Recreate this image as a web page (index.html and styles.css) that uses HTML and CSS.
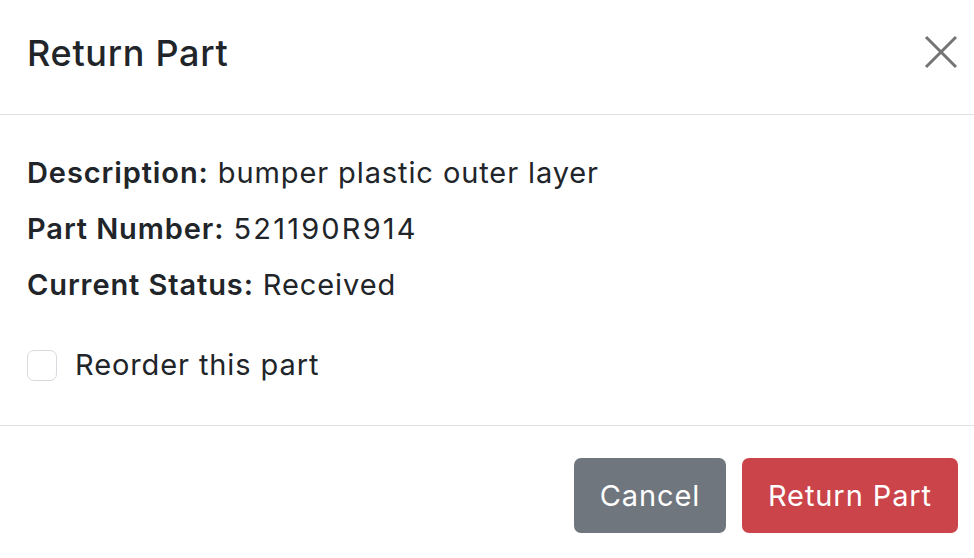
FILE: index.html
```html
<!DOCTYPE html>
<html lang="en">
<head>
  <meta charset="UTF-8" />
  <meta name="viewport" content="width=device-width, initial-scale=1" />
  <title>Return Part</title>
  <link rel="stylesheet" href="styles.css">
</head>
<body>

  <div class="modal">
    <!-- Header -->
    <div class="modal-header">
      <h5 class="modal-title">Return Part</h5>
      <button class="close" aria-label="Close">
        <svg width="34" height="34" viewBox="0 0 34 34">
          <path d="M2 2 L32 32 M32 2 L2 32" stroke="currentColor" stroke-width="3" stroke-linecap="butt" fill="none" />
        </svg>
      </button>
    </div>

    <!-- Body -->
    <div class="modal-body">
      <div class="details">
        <p><strong>Description:</strong> bumper plastic outer layer</p>
        <p><strong>Part Number:</strong> <span class="part-no">521190R914</span></p>
        <p><strong>Current Status:</strong> Received</p>
      </div>
      <label class="form-check">
        <input type="checkbox" class="check-input" />
        <span>Reorder this part</span>
      </label>
    </div>

    <!-- Footer -->
    <div class="modal-footer">
      <button class="btn btn-secondary">Cancel</button>
      <button class="btn btn-danger">Return Part</button>
    </div>
  </div>

</body>
</html>
```

FILE: styles.css
```css
* {
  margin: 0;
  padding: 0;
  box-sizing: border-box;
}

body {
  font-family: Inter, 'Noto Sans', sans-serif;
  background: #fff;
  color: #212529;
  width: 974px;
}

.modal {
  background: #fff;
}

.modal-header {
  height: 115px;
  display: flex;
  justify-content: space-between;
  align-items: flex-start;
  padding: 30px 16px 0 27px;
  border-bottom: 1px solid #dee2e6;
}

.modal-title {
  font-size: 36px;
  font-weight: 500;
  line-height: 46px;
  letter-spacing: 0.7px;
}

.close {
  background: none;
  border: none;
  color: #747474;
  width: 34px;
  height: 34px;
  margin-top: 5px;
  cursor: pointer;
}

.close svg {
  display: block;
}

.modal-body {
  display: flex;
  flex-direction: column;
  padding: 34px 27px 36px;
  font-size: 29px;
  letter-spacing: 0.9px;
}

.details {
  display: flex;
  flex-direction: column;
  gap: 8px;
}

.details p {
  line-height: 48px;
}

.details strong {
  font-weight: 600;
}

.part-no {
  letter-spacing: 2.2px;
}

.form-check {
  display: flex;
  align-items: center;
  gap: 18px;
  margin-top: 32px;
  line-height: 48px;
}

.check-input {
  appearance: none;
  width: 30px;
  height: 31px;
  border: 1.5px solid #d6dadf;
  border-radius: 7px;
  background: #fff;
}

.modal-footer {
  display: flex;
  justify-content: flex-end;
  gap: 16px;
  padding: 32px 16px 25px;
  border-top: 1px solid #dee2e6;
}

.btn {
  height: 75px;
  padding: 0;
  border: none;
  border-radius: 7px;
  color: #fff;
  font-family: inherit;
  font-size: 29px;
  letter-spacing: 0.9px;
  cursor: pointer;
}

.btn-secondary {
  background: #6f767e;
  width: 152px;
}

.btn-danger {
  background: #cb444a;
  width: 216px;
}
```
